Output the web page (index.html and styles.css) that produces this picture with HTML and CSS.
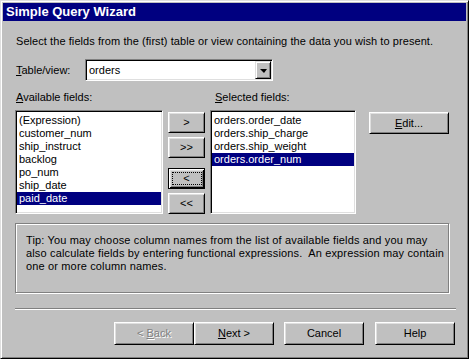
FILE: index.html
```html
<!DOCTYPE html>
<html>
<head>
<meta charset="utf-8">
<link rel="stylesheet" href="styles.css">
</head>
<body>
<div class="window">
  <div class="titlebar">Simple Query Wizard</div>
  <div class="body">
    <p class="intro">Select the fields from the (first) table or view containing the data you wish to present.</p>
    <div class="table-row">
      <span class="label"><u>T</u>able/view:</span>
      <div class="combo">
        <span class="combo-text">orders</span>
        <span class="combo-btn"><span class="arrow"></span></span>
      </div>
    </div>
    <div class="fields">
      <span class="label col-left"><u>A</u>vailable fields:</span>
      <span class="label col-right"><u>S</u>elected fields:</span>
      <ul class="listbox list-left">
        <li>(Expression)</li>
        <li>customer_num</li>
        <li>ship_instruct</li>
        <li>backlog</li>
        <li>po_num</li>
        <li>ship_date</li>
        <li class="selected">paid_date</li>
      </ul>
      <div class="movers">
        <button class="btn mover m1">&gt;</button>
        <button class="btn mover m2">&gt;&gt;</button>
        <button class="btn mover m3 default"><span class="focus">&lt;</span></button>
        <button class="btn mover m4">&lt;&lt;</button>
      </div>
      <ul class="listbox list-right">
        <li>orders.order_date</li>
        <li>orders.ship_charge</li>
        <li>orders.ship_weight</li>
        <li class="selected">orders.order_num</li>
      </ul>
      <div class="edit-col">
        <button class="btn edit"><span><u>E</u>dit...</span></button>
      </div>
    </div>
    <div class="tip">Tip: You may choose column names from the list of available fields and you may<br>also calculate fields by entering functional expressions.&nbsp; An expression may contain<br>one or more column names.</div>
    <div class="separator"></div>
    <div class="actions">
      <button class="btn action disabled"><span>&lt; <u>B</u>ack</span></button>
      <button class="btn action"><span><u>N</u>ext &gt;</span></button>
      <button class="btn action cancel">Cancel</button>
      <button class="btn action help">Help</button>
    </div>
  </div>
</div>
</body>
</html>
```

FILE: styles.css
```css
* { box-sizing: border-box; }
html, body { margin: 0; padding: 0; background: #c0c0c0; }
body {
  font-family: "Liberation Sans", Arial, sans-serif;
  font-size: 11px;
  color: #000;
}
.window {
  width: 469px;
  height: 359px;
  border: 1px solid;
  border-color: #dfdfdf #000 #000 #dfdfdf;
  box-shadow: inset 1px 1px 0 #fff, inset -1px -1px 0 #808080;
  padding: 2px;
  background: #c0c0c0;
}
.titlebar {
  height: 18px;
  background: #000080;
  color: #fff;
  font-weight: bold;
  font-size: 13px;
  line-height: 18px;
  padding-left: 3px;
}
.body {
  padding-left: 12px;
}
.intro {
  margin: 14px 0 0 1px;
  line-height: 13px;
  white-space: nowrap;
  letter-spacing: 0.07px;
}
.label { line-height: 13px; }
.table-row {
  display: flex;
  align-items: center;
  margin-top: 11px;
  height: 22px;
}
.table-row .label { padding-left: 1px; width: 70px; }
.combo {
  width: 188px;
  height: 22px;
  background: #fff;
  border: 1px solid;
  border-color: #808080 #fff #fff #808080;
  box-shadow: inset 1px 1px 0 #000, inset -1px -1px 0 #dfdfdf;
  padding: 1px;
  display: flex;
  align-items: center;
}
.combo-text { flex: 1; padding-left: 2px; line-height: 13px; }
.combo-btn {
  width: 16px;
  height: 18px;
  background: #c0c0c0;
  border: 1px solid;
  border-color: #dfdfdf #000 #000 #dfdfdf;
  box-shadow: inset 1px 1px 0 #fff, inset -1px -1px 0 #808080;
  display: flex;
  align-items: center;
  justify-content: center;
}
.arrow {
  width: 0; height: 0;
  border-left: 4px solid transparent;
  border-right: 3px solid transparent;
  border-top: 4px solid #000;
  margin-top: 1px;
}
.fields {
  margin-top: 10px;
  display: grid;
  grid-template-columns: 148px 37px 146px 80px;
  grid-template-rows: 13px 104px;
  column-gap: 5px;
  row-gap: 6px;
}
.fields .col-left { grid-column: 1; grid-row: 1; padding-left: 1px; }
.fields .col-right { grid-column: 3; grid-row: 1; padding-left: 5px; }
.movers { grid-column: 2; grid-row: 2; }
.list-left { grid-column: 1; grid-row: 2; }
.list-right { grid-column: 3; grid-row: 2; margin-left: 3px; width: 146px; }
.edit-col { grid-column: 4; grid-row: 2; margin-left: 8px; }
.listbox {
  margin: 0;
  list-style: none;
  background: #fff;
  border: 1px solid;
  border-color: #808080 #fff #fff #808080;
  box-shadow: inset 1px 1px 0 #000, inset -1px -1px 0 #dfdfdf;
  padding: 3px 1px 1px 1px;
  overflow: hidden;
}
.listbox li {
  height: 13px;
  line-height: 13px;
  padding-left: 2px;
  white-space: nowrap;
}
.listbox li.selected { background: #000080; color: #fff; }
.btn {
  font-family: "Liberation Sans", Arial, sans-serif;
  font-size: 11px;
  color: #000;
  background: #c0c0c0;
  border: 1px solid;
  border-color: #fff #000 #000 #fff;
  box-shadow: inset 1px 1px 0 #dfdfdf, inset -1px -1px 0 #808080;
  padding: 0;
  margin: 0;
  display: flex;
  align-items: center;
  justify-content: center;
  line-height: 13px;
  white-space: pre;
}
.movers { display: flex; flex-direction: column; padding-top: 2px; }
.mover { width: 37px; height: 21px; }
.m2 { margin-top: 4px; }
.m3 { margin-top: 10px; }
.m4 { margin-top: 4px; }
.btn.default {
  border-color: #000;
  box-shadow: inset 1px 1px 0 #fff, inset -1px -1px 0 #000, inset 2px 2px 0 #dfdfdf, inset -2px -2px 0 #808080;
}
.focus {
  width: 30px;
  height: 13px;
  border: 1px dotted #000;
  display: flex;
  align-items: center;
  justify-content: center;
}
.edit { width: 80px; height: 22px; margin-top: 2px; }
.tip {
  margin-top: 9px;
  width: 434px;
  height: 70px;
  border: 1px solid #808080;
  box-shadow: inset 1px 1px 0 #fff, 1px 1px 0 #fff;
  padding: 10px 0 0 10px;
  line-height: 13px;
  white-space: nowrap;
  letter-spacing: 0.15px;
}
.separator {
  margin-top: 15px;
  width: 441px;
  height: 2px;
  border-top: 1px solid #808080;
  border-bottom: 1px solid #fff;
}
.actions {
  display: flex;
  margin-top: 12px;
  padding-left: 99px;
}
.action { width: 80px; height: 23px; }
.cancel { margin-left: 10px; }
.help { margin-left: 11px; }
.disabled { color: #808080; text-shadow: 1px 1px 0 #fff; }
```
